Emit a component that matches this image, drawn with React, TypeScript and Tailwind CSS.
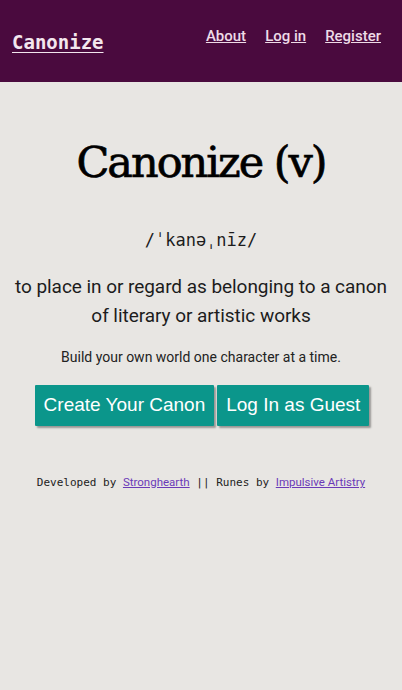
import React from "react";

export default function App() {
  return (
    <div className="min-h-[690px] bg-[#e8e6e3] flex flex-col" style={{ fontFamily: "Roboto, sans-serif" }}>
      <header className="h-[82px] bg-[#4a0a3e] flex items-center justify-between pl-[12px] pr-[21px]">
        <a href="#" className="text-[19px] font-bold text-[#f3e6ee] underline underline-offset-[3px] mt-[2px]" style={{ fontFamily: '"DejaVu Sans Mono", monospace' }}>Canonize</a>
        <nav className="flex gap-[19px] text-[15px] font-medium text-[#eedbe7] -mt-[10px] ml-auto">
          <a href="#" className="underline">About</a>
          <a href="#" className="underline">Log in</a>
          <a href="#" className="underline">Register</a>
        </nav>
      </header>
      <main className="flex flex-col items-center text-center text-[#1c1c1c]">
        <h1 className="mt-[50px] text-[43px] leading-[60px] text-black tracking-[-2px] [-webkit-text-stroke:0.7px_black]" style={{ fontFamily: '"DejaVu Serif", serif' }}>Canonize (v)</h1>
        <p className="mt-[36px] text-[17px] leading-[24px]" style={{ fontFamily: '"DejaVu Sans Mono", monospace' }}>/ˈkanəˌnīz/</p>
        <p className="mt-[20px] text-[19px] leading-[29px] whitespace-nowrap tracking-[-0.05px]">to place in or regard as belonging to a canon<br />of literary or artistic works</p>
        <p className="mt-[17px] text-[14px] leading-[20px] text-[#222]">Build your own world one character at a time.</p>
        <div className="mt-[18px] flex gap-[3px] pl-[2px]" style={{ fontFamily: '"Liberation Sans", Arial, sans-serif' }}>
          <button className="h-[41px] px-[9px] bg-[#0b968b] text-white text-[19px] shadow-[2px_2px_2px_rgba(0,0,0,0.35)] rounded-[1px]">Create Your Canon</button>
          <button className="h-[41px] px-[9px] bg-[#0b968b] text-white text-[19px] shadow-[2px_2px_2px_rgba(0,0,0,0.35)] rounded-[1px]">Log In as Guest</button>
        </div>
        <p className="mt-[48px] text-[11px] text-[#222] whitespace-nowrap" style={{ fontFamily: '"DejaVu Sans Mono", monospace' }}>
          Developed by <a href="#" className="underline text-[#6b3ab8] text-[11.5px]" style={{ fontFamily: "Roboto, sans-serif" }}>Stronghearth</a> <span className="text-[#222]">||</span> Runes by <a href="#" className="underline text-[#6b3ab8] text-[11.5px]" style={{ fontFamily: "Roboto, sans-serif" }}>Impulsive Artistry</a>
        </p>
      </main>
    </div>
  );
}
